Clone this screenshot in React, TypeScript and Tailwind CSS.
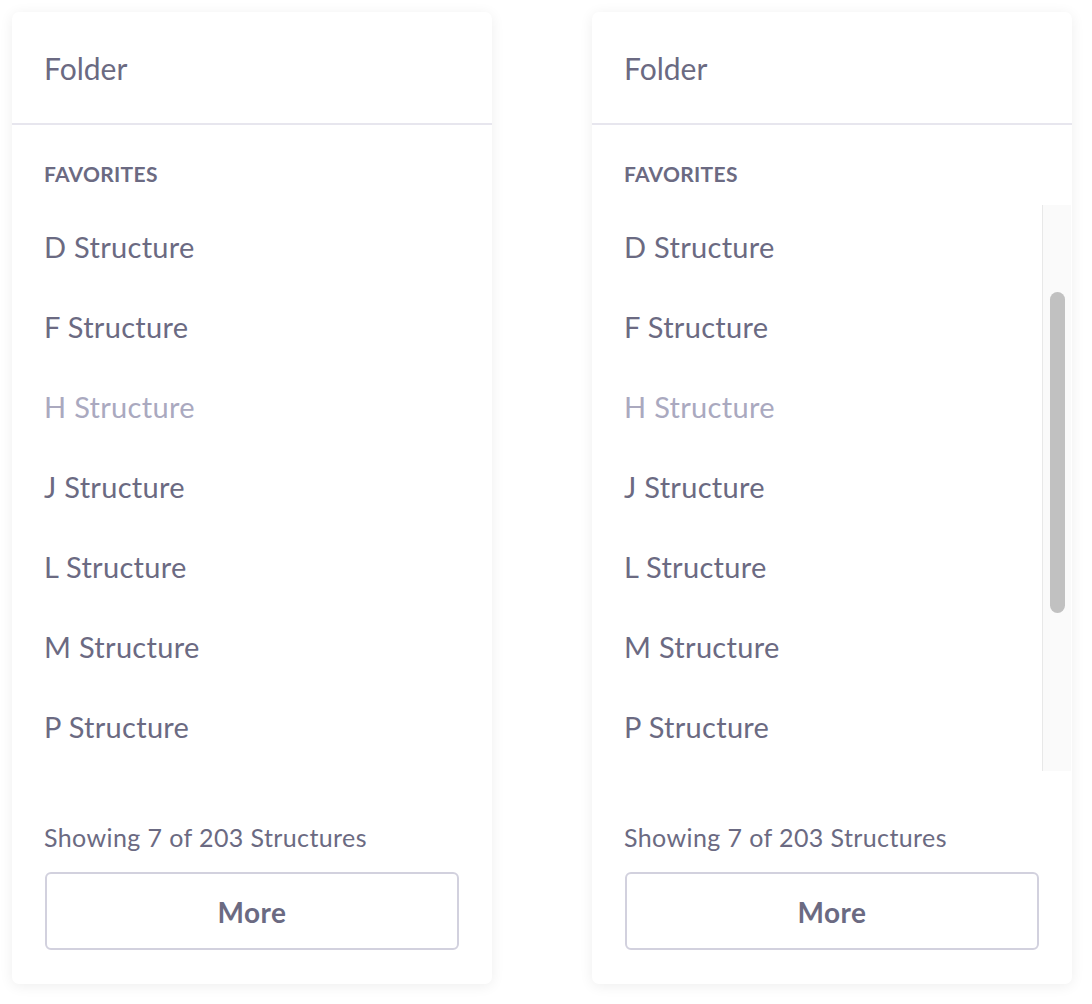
import React from 'react'

const items = [
  { name: 'D Structure' },
  { name: 'F Structure' },
  { name: 'H Structure', muted: true },
  { name: 'J Structure' },
  { name: 'L Structure' },
  { name: 'M Structure' },
  { name: 'P Structure' },
]

function Scrollbar() {
  return (
    <div className="w-[29px] mr-[1px] shrink-0 border-l border-[#e8e8e8] bg-[#fafafa] px-[7px]">
      <div className="mt-[87px] h-[321px] w-[15px] rounded-full bg-[#c1c1c1]" />
    </div>
  )
}

function FolderCard({ scroll }: { scroll?: boolean }) {
  return (
    <div className="flex h-[972px] w-[480px] flex-col rounded-[7px] bg-white shadow-[0_2px_14px_rgba(0,0,0,0.07)]">
      <div className="flex h-[113px] items-center border-b-2 border-[#e7e6ee] px-[32px] pt-[2px]">
        <span className="text-[30px] text-[#6b6a82]">Folder</span>
      </div>
      <div className="px-[32px] pt-[35px] pb-[17px]">
        <span className="text-[21px] leading-[28px] font-bold tracking-[0.3px] text-[#6b6a82]">FAVORITES</span>
      </div>
      <div className="flex h-[566px]">
        <ul className="flex-1 px-[32px]">
          {items.map((item) => (
            <li
              key={item.name}
              className={
                item.muted
                  ? 'flex h-[80px] items-center pt-[4px] text-[29px] tracking-[0.3px] text-[#aaa9bf]'
                  : 'flex h-[80px] items-center pt-[4px] text-[29px] tracking-[0.3px] text-[#6b6a82]'
              }
            >
              {item.name}
            </li>
          ))}
        </ul>
        {scroll && <Scrollbar />}
      </div>
      <div className="px-[33px] pt-[50px]">
        <p className="-ml-[1px] text-[25px] leading-[32px] tracking-[0.4px] text-[#6b6a82]">Showing 7 of 203 Structures</p>
        <button className="mt-[19px] flex h-[78px] w-full items-center justify-center rounded-[6px] border-2 border-[#d2d1de] bg-white pt-[2px] text-[28px] font-bold tracking-[0.5px] text-[#6b6a82]">
          More
        </button>
      </div>
    </div>
  )
}

export default function App() {
  return (
    <div className="flex h-[1004px] w-[1092px] gap-[100px] bg-white pl-[12px] pt-[12px] font-['Lato',sans-serif]">
      <FolderCard />
      <FolderCard scroll />
    </div>
  )
}
